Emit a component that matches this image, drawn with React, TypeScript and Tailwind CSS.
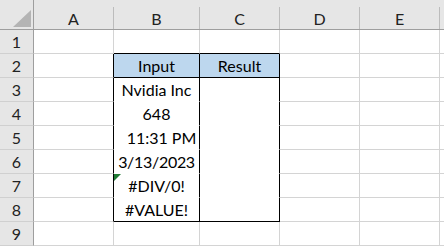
import React from "react";

const COLS = ["A", "B", "C", "D", "E", ""];
const WIDTHS = [80, 86, 80, 80, 80, 80];

type Cell = { text?: string; extra?: string };

const data: Record<string, Cell> = {
  B2: { text: "Input" },
  C2: { text: "Result" },
  B3: { text: "Nvidia Inc" },
  B4: { text: "648" },
  B5: { text: "11:31 PM", extra: "pl-[10px]" },
  B6: { text: "3/13/2023", extra: "tracking-[-0.3px]" },
  B7: { text: "#DIV/0!" },
  B8: { text: "#VALUE!" },
};

function borderClasses(col: string, row: number) {
  const inTable = (col === "B" || col === "C") && row >= 2 && row <= 8;
  let r = "border-r-[#d4d4d4]";
  let b = "border-b-[#d4d4d4]";
  if (col === "A" && row >= 2 && row <= 8) r = "border-r-black";
  if ((col === "B" || col === "C") && row === 1) b = "border-b-black";
  if (inTable) {
    r = "border-r-black";
    if (row === 2 || row === 8) b = "border-b-black";
    else b = "border-b-white";
  }
  return `${r} ${b}`;
}

export default function App() {
  const rows = [1, 2, 3, 4, 5, 6, 7, 8, 9];
  return (
    <div
      className="w-[444px] h-[250px] overflow-hidden bg-white text-black"
      style={{ fontFamily: "Lato, 'Liberation Sans', sans-serif" }}
    >
      <div className="flex h-[30px] bg-[#e6e6e6] border-b border-b-[#9e9e9e]">
        <div className="w-[34px] shrink-0 border-r border-r-[#9e9e9e] relative">
          <svg className="absolute left-[13px] top-[10px]" width="18" height="17" viewBox="0 0 18 17">
            <polygon points="18,0 18,17 0,17" fill="#b4b4b4" />
          </svg>
        </div>
        {COLS.map((c, i) => (
          <div
            key={i}
            style={{ width: WIDTHS[i] }}
            className="shrink-0 mt-[7px] border-r border-r-[#bcbcbc] flex items-center justify-center text-[16px] text-[#222] leading-none pt-[1px]"
          >
            {c}
          </div>
        ))}
      </div>
      {rows.map((r) => (
        <div key={r} className="flex h-[24px]">
          <div className="w-[34px] shrink-0 bg-[#e6e6e6] border-r border-r-[#9e9e9e] border-b border-b-[#d0d0d0] flex items-end justify-center pb-[3px] text-[16px] text-[#222] leading-none">
            {r}
          </div>
          {COLS.map((c, i) => {
            const key = `${c}${r}`;
            const cell = data[key];
            const fill = (c === "B" || c === "C") && r === 2 ? "bg-[#bdd7ee]" : "bg-white";
            return (
              <div
                key={i}
                style={{ width: WIDTHS[i] }}
                className={`relative shrink-0 border-r border-b ${borderClasses(c, r)} ${fill} flex items-end justify-center pb-[3px] text-[16px] leading-none whitespace-nowrap`}
              >
                {key === "B7" && (
                  <svg className="absolute left-0 top-0" width="7" height="7" viewBox="0 0 7 7">
                    <polygon points="0,0 7,0 0,7" fill="#1e7b34" />
                  </svg>
                )}
                {cell && <span className={cell.extra ?? ""}>{cell.text}</span>}
              </div>
            );
          })}
        </div>
      ))}
    </div>
  );
}
